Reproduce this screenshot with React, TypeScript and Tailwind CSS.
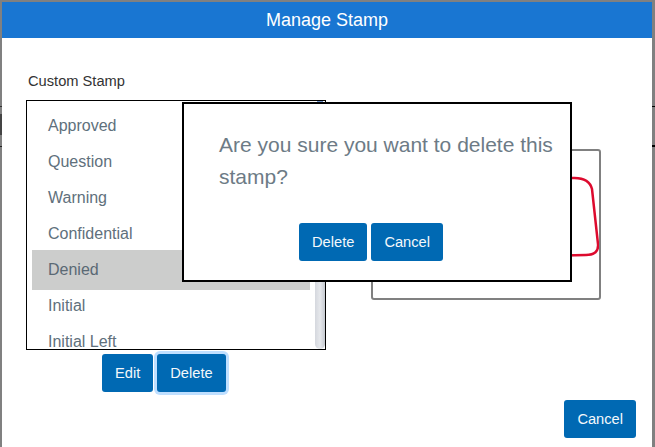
const stamps = ["Approved", "Question", "Warning", "Confidential", "Denied", "Initial", "Initial Left"];

function Button({ label, className = "" }: { label: string; className?: string }) {
  return (
    <button className={`h-[38px] rounded-[3px] bg-[#0069b3] px-[13px] text-[14.67px] text-[#f4f8fb] ${className}`}>
      {label}
    </button>
  );
}

function StampList() {
  return (
    <div className="flex h-[250px] w-[300px] overflow-hidden border border-black bg-white">
      <ul className="ml-[5px] w-[278px] pt-[7px] text-[16px] text-[#60707c]">
        {stamps.map((name) =>
          name === "Denied" ? (
            <li key={name} className="-my-[2px] flex h-[40px] items-center bg-[#cccdcc] pl-4 text-[#5a6974]">
              {name}
            </li>
          ) : (
            <li key={name} className="flex h-9 items-center pl-4">
              {name}
            </li>
          ),
        )}
      </ul>
      <div className="ml-[5px] flex w-[10px] flex-col">
        <div className="mx-[2px] h-px bg-[#6d8fc4]" />
        <div className="flex-1 rounded-b-[5px] bg-gradient-to-r from-[#d5d8de] via-[#e6e8ec] to-[#c6cad1]" />
      </div>
    </div>
  );
}

function StampPreview() {
  return (
    <div className="mt-[49px] ml-[45px] h-[151px] w-[230px] rounded-[3px] border-2 border-[#808080] bg-white">
      <svg viewBox="0 0 226 147" className="h-full w-full">
        <path
          d="M30 29 L199 27 Q216 26 219 38 L225 93 Q226 104 213 104 L30 108 Q18 108 18 98 L18 40 Q18 29 30 29 Z"
          fill="none"
          stroke="#dd0a2e"
          strokeWidth="2.5"
        />
      </svg>
    </div>
  );
}

function ConfirmDialog() {
  return (
    <div className="absolute top-[102px] left-[182px] h-[180px] w-[390px] border-2 border-black bg-white pt-[25px] pr-[15px] pl-[35px]">
      <p className="text-[21px] leading-8 text-[#6d7b86]">Are you sure you want to delete this stamp?</p>
      <div className="mt-[30px] ml-[80px] flex gap-1">
        <Button label="Delete" />
        <Button label="Cancel" />
      </div>
    </div>
  );
}

export default function App() {
  return (
    <div className="relative flex h-[447px] w-[655px] overflow-hidden bg-[#808080] pt-[2px] font-['Liberation_Sans',Arial,sans-serif]">
      {/* page behind the modal, only the edges show */}
      <div className="w-[2px] shrink-0">
        <div className="mt-[104px] h-px bg-[#333333]" />
        <div className="mt-[7px] h-[21px] bg-[#444444]" />
        <div className="mt-[11px] h-px bg-[#222222]" />
      </div>

      <div className="flex w-[650px] shrink-0 flex-col bg-white">
        <div className="flex h-9 shrink-0 items-center justify-center bg-[#1976d2] text-[18px] text-white">
          Manage Stamp
        </div>
        <div className="flex flex-1 flex-col pt-[33px]">
          <label className="ml-[26px] block h-5 text-[14.67px] leading-5 text-[#333333]">Custom Stamp</label>
          <div className="mt-[9px] ml-[24px] flex items-start">
            <StampList />
            <StampPreview />
          </div>
          <div className="mt-1 ml-[100px] flex gap-1">
            <Button label="Edit" />
            <Button label="Delete" className="ring-[3px] ring-[#bfdfff]" />
          </div>
          <div className="mt-2 mr-4 flex justify-end">
            <Button label="Cancel" />
          </div>
        </div>
      </div>

      <div className="w-[3px] shrink-0">
        <div className="mt-[104px] h-px bg-black" />
        <div className="mt-[38px] h-[2px] bg-black" />
      </div>

      <ConfirmDialog />
    </div>
  );
}
